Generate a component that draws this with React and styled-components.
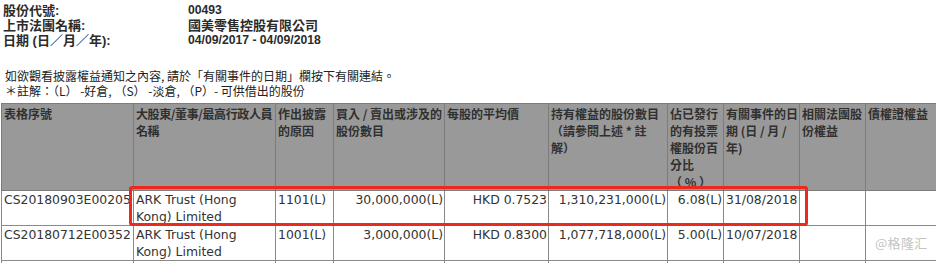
import React from "react";
import styled, { createGlobalStyle } from "styled-components";

const Global = createGlobalStyle`
  html, body { margin: 0; padding: 0; background: #fff; }
  body { overflow: hidden; width: 936px; height: 263px; }
`;

const Page = styled.div`
  position: relative;
  width: 936px;
  height: 263px;
  overflow: hidden;
  font-family: "Liberation Sans", "Noto Sans CJK TC", sans-serif;
  color: #333;
`;

const Info = styled.div`
  display: grid;
  grid-template-columns: 185px auto;
  padding: 3px 0 0 3px;
  font-weight: bold;
  font-size: 13px;
  line-height: 15px;
  color: #2b2b2b;
`;

const InfoValue = styled.div`
  font-size: ${(p) => (p.$latin ? "12.2px" : "13px")};
`;

const Notes = styled.div`
  margin-top: 20px;
  padding-left: 5px;
  font-family: "Noto Sans CJK TC", sans-serif;
  font-size: 12px;
  line-height: 15px;
  color: #222;
`;

const Table = styled.table`
  margin: 5px 0 0 1px;
  border-collapse: collapse;
  table-layout: fixed;
  width: 944px;
`;

const Th = styled.th`
  background: #999;
  color: #303030;
  border: 1px solid #7c7c7c;
  font-family: "Noto Sans CJK TC", sans-serif;
  font-weight: bold;
  font-size: 12px;
  line-height: 17px;
  letter-spacing: ${(p) => (p.$tight ? "-0.4px" : "0")};
  text-align: left;
  vertical-align: top;
  white-space: nowrap;
  overflow: hidden;
  padding: 1px 0 0 2px;
  height: 85px;
`;

const Td = styled.td`
  border: 1px solid #8a8a8a;
  font-family: "DejaVu Sans", "Noto Sans CJK TC", sans-serif;
  font-size: 12.4px;
  line-height: 17px;
  color: #333;
  vertical-align: top;
  text-align: ${(p) => (p.$right ? "right" : "left")};
  white-space: ${(p) => (p.$nowrap ? "nowrap" : "normal")};
  padding: 0 1px 0 2px;
  height: 34px;
`;

const Highlight = styled.div`
  position: absolute;
  left: 129px;
  top: 186px;
  width: 673px;
  height: 34px;
  border: 3px solid #ea2a1f;
  border-radius: 3px;
  pointer-events: none;
`;

const Watermark = styled.div`
  position: absolute;
  left: 875px;
  top: 235px;
  font-family: "Noto Sans CJK SC", sans-serif;
  font-size: 13px;
  line-height: 16px;
  color: #c4c4c4;
  letter-spacing: 0.3px;
`;

const widths = [132, 142, 58, 111, 104, 119, 56, 76, 66, 80];

const headers = [
  ["表格序號"],
  ["大股東/董事/最高行政人員", "名稱"],
  ["作出披露", "的原因"],
  ["買入 / 賣出或涉及的", "股份數目"],
  ["每股的平均價"],
  ["持有權益的股份數目", "（請參閱上述 * 註", "解）"],
  ["佔已發行", "的有投票", "權股份百", "分比", "（ % ）"],
  ["有關事件的日", "期 (日 / 月 /", "年)"],
  ["相關法團股", "份權益"],
  ["債權證權益"],
];

const rows = [
  ["CS20180903E00205", "ARK Trust (Hong Kong) Limited", "1101(L)", "30,000,000(L)", "HKD 0.7523", "1,310,231,000(L)", "6.08(L)", "31/08/2018", "", ""],
  ["CS20180712E00352", "ARK Trust (Hong Kong) Limited", "1001(L)", "3,000,000(L)", "HKD 0.8300", "1,077,718,000(L)", "5.00(L)", "10/07/2018", "", ""],
  ["", "", "", "", "", "", "", "", "", ""],
];

const rightCols = [3, 4, 5, 6];

export default function App() {
  return (
    <Page>
      <Global />
      <Info>
        <div>股份代號:</div>
        <InfoValue $latin>00493</InfoValue>
        <div>上市法團名稱:</div>
        <InfoValue>國美零售控股有限公司</InfoValue>
        <div>日期 (日／月／年):</div>
        <InfoValue $latin>04/09/2017 - 04/09/2018</InfoValue>
      </Info>
      <Notes>
        <div>如欲觀看披露權益通知之內容, 請於「有關事件的日期」欄按下有關連結。</div>
        <div>＊註解：（L） -好倉, （S） -淡倉, （P）- 可供借出的股份</div>
      </Notes>
      <Table>
        <colgroup>
          {widths.map((w, i) => (
            <col key={i} style={{ width: w }} />
          ))}
        </colgroup>
        <thead>
          <tr>
            {headers.map((lines, i) => (
              <Th key={i} $tight={i === 1}>
                {lines.map((l, j) => (
                  <div key={j}>{l}</div>
                ))}
              </Th>
            ))}
          </tr>
        </thead>
        <tbody>
          {rows.map((r, ri) => (
            <tr key={ri}>
              {r.map((c, ci) => (
                <Td key={ci} $right={rightCols.includes(ci)} $nowrap={ci !== 1}>
                  {c}
                </Td>
              ))}
            </tr>
          ))}
        </tbody>
      </Table>
      <Highlight />
      <Watermark>@格隆汇</Watermark>
    </Page>
  );
}
